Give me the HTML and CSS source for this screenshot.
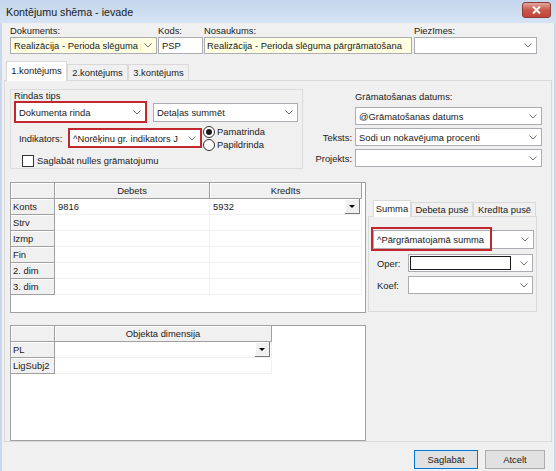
FILE: index.html
```html
<!DOCTYPE html>
<html lang="lv">
<head>
    <meta charset="UTF-8">
    <title>Kontējumu shēma - ievade</title>
    <link rel="stylesheet" href="styles.css">
</head>
<body>
<div class="window">
    <div class="titlebar">
        <span class="title">Kontējumu shēma - ievade</span>
        <div class="close-btn">
            <svg width="9" height="8" viewBox="0 0 9 8"><path d="M1 0.5 L8 7.5 M8 0.5 L1 7.5" stroke="#fff" stroke-width="2"/></svg>
        </div>
    </div>

    <div class="client">
        <!-- dokumenta galva -->
        <div class="doc-head">
            <div class="fld w-doc">
                <label>Dokuments:</label>
                <div class="combo yellow">
                    <span class="val">Realizācija - Perioda slēguma p</span>
                    <svg class="chev" viewBox="0 0 8 5"><polyline points="0.5,0.5 4,4 7.5,0.5"/></svg>
                </div>
            </div>
            <div class="fld w-kods">
                <label>Kods:</label>
                <div class="edit">PSP</div>
            </div>
            <div class="fld w-nos">
                <label>Nosaukums:</label>
                <div class="edit yellow">Realizācija - Perioda slēguma pārgrāmatošana</div>
            </div>
            <div class="fld w-piez">
                <label>Piezīmes:</label>
                <div class="combo">
                    <span class="val"></span>
                    <svg class="chev" viewBox="0 0 8 5"><polyline points="0.5,0.5 4,4 7.5,0.5"/></svg>
                </div>
            </div>
        </div>

        <div class="tabs">
            <div class="tab active">1.kontējums</div>
            <div class="tab">2.kontējums</div>
            <div class="tab">3.kontējums</div>
        </div>

        <div class="tab-panel">
            <div class="top-section">
                <div class="group">
                    <div class="caption">Rindas tips</div>
                    <div class="g-row1">
                        <div class="combo marked w-rinda">
                            <span class="val">Dokumenta rinda</span>
                            <svg class="chev" viewBox="0 0 8 5"><polyline points="0.5,0.5 4,4 7.5,0.5"/></svg>
                        </div>
                        <div class="combo w-detal">
                            <span class="val">Detaļas summēt</span>
                            <svg class="chev" viewBox="0 0 8 5"><polyline points="0.5,0.5 4,4 7.5,0.5"/></svg>
                        </div>
                    </div>
                    <div class="g-row2">
                        <span class="ind-label">Indikators:</span>
                        <div class="combo marked w-ind">
                            <span class="val">^Norēķinu gr. indikators J</span>
                            <svg class="chev" viewBox="0 0 8 5"><polyline points="0.5,0.5 4,4 7.5,0.5"/></svg>
                        </div>
                        <div class="radios">
                            <div class="radio-row"><span class="radio checked"></span>Pamatrinda</div>
                            <div class="radio-row"><span class="radio"></span>Papildrinda</div>
                        </div>
                    </div>
                    <div class="g-row3">
                        <span class="checkbox"></span>Saglabāt nulles grāmatojumu
                    </div>
                </div>

                <div class="right-fields">
                    <div class="rf-row head">
                        <span class="rf-label"></span>
                        <span class="rf-head">Grāmatošanas datums:</span>
                    </div>
                    <div class="rf-row">
                        <span class="rf-label"></span>
                        <div class="combo">
                            <span class="val">@Grāmatošanas datums</span>
                            <svg class="chev" viewBox="0 0 8 5"><polyline points="0.5,0.5 4,4 7.5,0.5"/></svg>
                        </div>
                    </div>
                    <div class="rf-row">
                        <span class="rf-label">Teksts:</span>
                        <div class="combo">
                            <span class="val">Sodi un nokavējuma procenti</span>
                            <svg class="chev" viewBox="0 0 8 5"><polyline points="0.5,0.5 4,4 7.5,0.5"/></svg>
                        </div>
                    </div>
                    <div class="rf-row">
                        <span class="rf-label">Projekts:</span>
                        <div class="combo">
                            <span class="val"></span>
                            <svg class="chev" viewBox="0 0 8 5"><polyline points="0.5,0.5 4,4 7.5,0.5"/></svg>
                        </div>
                    </div>
                </div>
            </div>

            <div class="lower">
                <div class="grids">
                    <div class="gridbox main-grid">
                        <div class="grid cols-3">
                            <div class="hc"></div><div class="hc">Debets</div><div class="hc">Kredīts</div>
                            <div class="rh">Konts</div><div class="dc">9816</div><div class="dc">5932<span class="dd-btn"></span></div>
                            <div class="rh">Strv</div><div class="dc"></div><div class="dc"></div>
                            <div class="rh">Izmp</div><div class="dc"></div><div class="dc"></div>
                            <div class="rh">Fin</div><div class="dc"></div><div class="dc"></div>
                            <div class="rh">2. dim</div><div class="dc"></div><div class="dc"></div>
                            <div class="rh">3. dim</div><div class="dc"></div><div class="dc"></div>
                        </div>
                    </div>
                    <div class="gridbox dim-grid">
                        <div class="grid cols-2">
                            <div class="hc"></div><div class="hc">Objekta dimensija</div>
                            <div class="rh">PL</div><div class="dc"><span class="dd-btn"></span></div>
                            <div class="rh">LigSubj2</div><div class="dc"></div>
                        </div>
                    </div>
                </div>

                <div class="side">
                    <div class="itabs">
                        <div class="itab active w-summa">Summa</div>
                        <div class="itab w-deb">Debeta pusē</div>
                        <div class="itab w-kred">Kredīta pusē</div>
                    </div>
                    <div class="ipanel">
                        <div class="combo summa-combo">
                            <span class="val">^Pārgrāmatojamā summa</span>
                            <svg class="chev" viewBox="0 0 8 5"><polyline points="0.5,0.5 4,4 7.5,0.5"/></svg>
                            <span class="red-mark"></span>
                        </div>
                        <div class="ip-row oper">
                            <span class="ip-label">Oper:</span>
                            <div class="combo">
                                <span class="inner-edit"></span>
                                <svg class="chev" viewBox="0 0 8 5"><polyline points="0.5,0.5 4,4 7.5,0.5"/></svg>
                            </div>
                        </div>
                        <div class="ip-row koef">
                            <span class="ip-label">Koef:</span>
                            <div class="combo">
                                <span class="val"></span>
                                <svg class="chev" viewBox="0 0 8 5"><polyline points="0.5,0.5 4,4 7.5,0.5"/></svg>
                            </div>
                        </div>
                    </div>
                </div>
            </div>
        </div>

        <div class="footer">
            <div class="btn default">Saglabāt</div>
            <div class="btn">Atcelt</div>
        </div>
    </div>
</div>
</body>
</html>
```

FILE: styles.css
```css
* {
    box-sizing: border-box;
}

body {
    margin: 0;
    font-family: "Liberation Sans", Arial, sans-serif;
    font-size: 9.4px;
    color: #1a1a1a;
    background: #f0f0f0;
}

.window {
    width: 556px;
    height: 471px;
    display: flex;
    flex-direction: column;
    overflow: hidden;
}

/* virsraksta josla */
.titlebar {
    height: 23px;
    display: flex;
    align-items: center;
    padding-left: 6px;
    background: linear-gradient(#c3d6ed, #d6e3f3);
}

.title {
    font-size: 10.7px;
}

.close-btn {
    margin-left: auto;
    margin-right: 5px;
    margin-top: -3px;
    width: 29px;
    height: 16px;
    border: 1px solid #8e3b33;
    border-radius: 3px;
    background: linear-gradient(#e2a69d, #c9574b 50%, #c2453a);
    display: flex;
    align-items: center;
    justify-content: center;
}

.client {
    flex: 1;
    display: flex;
    flex-direction: column;
    border-left: 2px solid #c9d8ec;
    border-right: 2px solid #c9d8ec;
}

/* ievades lauki */
.combo,
.edit {
    display: flex;
    align-items: center;
    height: 18px;
    border: 1px solid #abadb3;
    background: #fff;
    padding: 0 4px 0 3px;
    white-space: nowrap;
    overflow: hidden;
}

.combo .val {
    flex: 1;
    overflow: hidden;
}

.yellow {
    background: #ffffe1;
}

.chev {
    width: 8px;
    height: 5px;
    flex: none;
    margin-left: 3px;
}

.chev polyline {
    fill: none;
    stroke: #707070;
    stroke-width: 1;
}

.marked {
    border: 2px solid #c1272d;
}

/* dokumenta galva */
.doc-head {
    display: flex;
    padding: 2px 0 0 8px;
}

.fld label {
    display: block;
    height: 12px;
    line-height: 12px;
}

.fld .combo,
.fld .edit {
    height: 17px;
}

.w-doc { width: 147px; margin-right: 1px; }
.w-kods { width: 45px; margin-right: 1px; }
.w-nos { width: 208px; margin-right: 2px; }
.w-piez { width: 123px; }

.w-nos .edit {
    padding-left: 2px;
}

/* lapas */
.tabs {
    display: flex;
    align-items: flex-end;
    height: 19px;
    margin: 7px 0 0 4px;
    position: relative;
    z-index: 1;
}

.tab {
    width: 61px;
    height: 16px;
    line-height: 15px;
    text-align: center;
    border: 1px solid #d9d9d9;
    border-bottom: none;
    background: #f0f0f0;
}

.tab.active {
    height: 20px;
    line-height: 18px;
    margin-bottom: -1px;
    background: #fff;
}

.tab-panel {
    height: 362px;
    margin: 0 2px;
    border: 1px solid #d9d9d9;
    background: #f0f0f0;
    display: flex;
    flex-direction: column;
}

.top-section {
    display: flex;
    padding: 8px 9px 0 5px;
}

/* Rindas tips */
.group {
    width: 293px;
    height: 80px;
    border: 1px solid #dcdcdc;
    padding: 0 0 0 3px;
}

.caption {
    height: 11px;
    line-height: 11px;
}

.g-row1 {
    display: flex;
    align-items: center;
    gap: 6px;
    height: 22px;
}

.w-rinda { width: 133px; height: 22px; }
.w-detal { width: 145px; height: 19px; }

.g-row2 {
    display: flex;
    align-items: center;
    height: 26px;
    margin-top: 2px;
}

.ind-label {
    width: 54px;
    padding-left: 5px;
}

.w-ind { width: 134px; height: 20px; }

.radios {
    margin-left: 1px;
    display: flex;
    flex-direction: column;
}

.radio-row {
    display: flex;
    align-items: center;
    height: 13px;
}

.radio {
    width: 12px;
    height: 12px;
    border: 1px solid #333;
    border-radius: 50%;
    background: #fff;
    margin-right: 2px;
    display: flex;
    align-items: center;
    justify-content: center;
}

.radio.checked::after {
    content: "";
    width: 6px;
    height: 6px;
    border-radius: 50%;
    background: #1a1a1a;
}

.g-row3 {
    display: flex;
    align-items: center;
    height: 13px;
    margin-top: 3px;
    padding-left: 8px;
}

.checkbox {
    width: 12px;
    height: 12px;
    border: 1px solid #333;
    background: #fff;
    margin-right: 3px;
}

/* labā puse */
.right-fields {
    margin-left: auto;
    display: flex;
    flex-direction: column;
    gap: 3px;
    padding-top: 1px;
}

.rf-row {
    display: flex;
    align-items: center;
    height: 18px;
}

.rf-row.head {
    height: 13px;
    margin-bottom: 1px;
}

.rf-row .combo {
    width: 187px;
    height: 18px;
}

.rf-label {
    width: 45px;
    margin-right: 3px;
    text-align: right;
}

/* režģi */
.lower {
    flex: 1;
    display: flex;
    margin-top: 13px;
}

.grids {
    width: 356px;
    margin-left: 5px;
    display: flex;
    flex-direction: column;
}

.gridbox {
    border: 1px solid #a0a0a0;
    background: #fff;
}

.main-grid {
    height: 131px;
}

.dim-grid {
    flex: 1;
    margin: 12px 0 0;
}

.grid {
    display: grid;
    grid-auto-rows: 16px;
}

.cols-3 { grid-template-columns: 44px 155px 152px; }
.cols-2 { grid-template-columns: 44px 217px; }

.hc,
.rh {
    background: #f0f0f0;
    border-right: 1px solid #a0a0a0;
    border-bottom: 1px solid #a0a0a0;
    box-shadow: inset 1px 1px 0 #fff;
    line-height: 15px;
    white-space: nowrap;
}

.hc {
    text-align: center;
}

.rh {
    padding-left: 2px;
}

.dc {
    display: flex;
    align-items: center;
    justify-content: space-between;
    padding-left: 3px;
    border-right: 1px solid #f0f0f0;
    border-bottom: 1px solid #f0f0f0;
}

.dd-btn {
    width: 15px;
    height: 15px;
    margin-left: auto;
    margin-right: 1px;
    background: #f0f0f0;
    border-right: 1px solid #7a7a7a;
    border-bottom: 1px solid #7a7a7a;
    box-shadow: inset 1px 1px 0 #fff;
    display: flex;
    align-items: center;
    justify-content: center;
}

.dd-btn::after {
    content: "";
    border-left: 3px solid transparent;
    border-right: 3px solid transparent;
    border-top: 3px solid #000;
}

/* summa lapas */
.side {
    flex: 1;
    margin-left: 2px;
    padding-top: 18px;
}

.itabs {
    display: flex;
    align-items: flex-end;
    height: 16px;
    margin-left: 5px;
    position: relative;
    z-index: 1;
}

.itab {
    height: 14px;
    line-height: 13px;
    text-align: center;
    border: 1px solid #d9d9d9;
    border-bottom: none;
    background: #f0f0f0;
    white-space: nowrap;
    overflow: hidden;
}

.itab.active {
    height: 17px;
    line-height: 15px;
    margin-bottom: -1px;
    background: #fff;
}

.w-summa { width: 38px; }
.w-deb { width: 62px; }
.w-kred { width: 63px; }

.ipanel {
    width: 169px;
    height: 96px;
    border: 1px solid #d9d9d9;
    padding: 13px 3px 0 4px;
}

.summa-combo {
    position: relative;
    overflow: visible;
    height: 19px;
    width: 161px;
}

.red-mark {
    position: absolute;
    left: -3px;
    top: -4px;
    width: 121px;
    height: 24px;
    border: 2px solid #c1272d;
}

.ip-row {
    display: flex;
    align-items: center;
    height: 18px;
}

.ip-row.oper { margin-top: 5px; }
.ip-row.koef { margin-top: 4px; }

.ip-label {
    width: 35px;
    padding-left: 4px;
}

.ip-row .combo {
    width: 127px;
    height: 18px;
    padding-left: 1px;
}

.inner-edit {
    flex: 1;
    height: 14px;
    border: 1px solid #1a1a1a;
    margin-right: 6px;
}

/* pogas */
.footer {
    display: flex;
    justify-content: flex-end;
    gap: 7px;
    padding: 8px 9px 0 0;
}

.btn {
    width: 60px;
    height: 19px;
    line-height: 17px;
    text-align: center;
    background: #e1e1e1;
    border: 1px solid #adadad;
}

.btn.default {
    width: 64px;
    border-color: #0078d7;
}
```
